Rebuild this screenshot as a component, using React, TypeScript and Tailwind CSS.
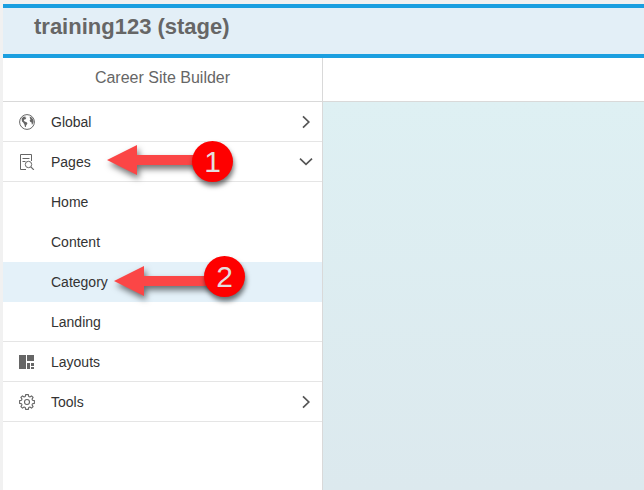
import { Fragment, type ReactNode } from 'react'

interface CalloutProps {
  step: number
  className: string
  badgeClassName: string
}

interface MenuItem {
  label: string
  icon: ReactNode
  chevron?: 'right' | 'down'
  callout?: ReactNode
  children?: { label: string; active?: boolean; callout?: ReactNode }[]
}

function GlobeIcon() {
  return (
    <svg viewBox="0 0 16 16" className="size-4" aria-hidden="true">
      <circle cx="8" cy="8" r="7.4" fill="none" stroke="#666" strokeWidth="1" />
      <path
        fill="#666"
        d="M2.6 4.4 4.4 2.8 6.6 2.4 6.2 3.6 7.4 3.8 6.6 5.2 5.2 5.6 4.8 6.8 5.8 7.4 8 8.6 8.4 9.8 7.2 11.2 6.8 13 6 13 5.4 10.4 4.2 8.6 3 7.4Z"
      />
      <path
        fill="#666"
        d="M10.6 2.6 12.4 3.2 14.2 5.6 14.6 8 13.4 10.6 12.8 10.4 12.6 8.4 11.2 7.8 10.6 6.4 11.6 5.2 11 4.4Z"
      />
    </svg>
  )
}

function PagesIcon() {
  return (
    <svg viewBox="0 0 16 16" className="size-4" fill="none" stroke="#666" aria-hidden="true">
      <path d="M12.5 7V.5h-11v15H7M3.5 4.5h7M3.5 7.5h3" />
      <circle cx="9.5" cy="10.5" r="3.2" />
      <path d="m11.8 12.8 3 3" strokeWidth="1.2" />
    </svg>
  )
}

function LayoutIcon() {
  return (
    <svg viewBox="0 0 16 16" className="size-4" fill="#666" aria-hidden="true">
      <path d="M0 1h7v14H0zM8 1h7v6H8zM8 9h3v6H8zM12 9h3v3h-3zM12 13h3v2h-3z" />
    </svg>
  )
}

function GearIcon() {
  return (
    <svg viewBox="0 0 16 16" className="size-4" fill="none" stroke="#666" strokeWidth="1.1" strokeLinejoin="round" aria-hidden="true">
      <path d="M6.6.6h2.8l.3 1.9 1.2.5 1.6-1.1 1.6 1.6L13 5.1l.5 1.2 1.9.3v2.8l-1.9.3-.5 1.2 1.1 1.6-1.6 1.6-1.6-1.1-1.2.5-.3 1.9H6.6l-.3-1.9-1.2-.5-1.6 1.1-1.6-1.6L3 10.9l-.5-1.2-1.9-.3V6.6l1.9-.3L3 5.1 1.9 3.5l1.6-1.6L5.1 3l1.2-.5z" />
      <circle cx="8" cy="8" r="2.5" />
    </svg>
  )
}

function Chevron({ direction }: { direction: 'right' | 'down' }) {
  return (
    <svg viewBox="0 0 16 16" className="size-4" fill="none" stroke="#555" strokeWidth="1.7" aria-hidden="true">
      <path d={direction === 'right' ? 'M5 2.3 10.8 8 5 13.7' : 'M2 4.7 8 10.3 14 4.7'} />
    </svg>
  )
}

// Red arrow pointing at a menu entry, with a numbered badge on its tail
function Callout({ step, className, badgeClassName }: CalloutProps) {
  return (
    <div className={`pointer-events-none absolute z-10 flex items-center ${className}`}>
      <svg
        viewBox="0 0 100 30"
        className="h-[30px] w-[100px] overflow-visible drop-shadow-[2px_4px_3px_rgba(0,0,0,0.55)]"
        aria-hidden="true"
      >
        <path d="M0 15 30 0v10h70v10H30v10z" fill="#fb4646" />
      </svg>
      <span
        className={`absolute flex size-[41px] items-center justify-center rounded-full bg-[#fe0000] text-[30px] leading-none text-[#e4dede] shadow-[1px_4px_5px_rgba(0,0,0,0.55)] ${badgeClassName}`}
      >
        {step}
      </span>
    </div>
  )
}

const menu: MenuItem[] = [
  { label: 'Global', icon: <GlobeIcon />, chevron: 'right' },
  {
    label: 'Pages',
    icon: <PagesIcon />,
    chevron: 'down',
    callout: <Callout step={1} className="left-[104px] top-[3px]" badgeClassName="left-[85px] -top-1" />,
    children: [
      { label: 'Home' },
      { label: 'Content' },
      {
        label: 'Category',
        active: true,
        callout: <Callout step={2} className="left-[111px] top-1" badgeClassName="left-[90px] -top-[10px]" />,
      },
      { label: 'Landing' },
    ],
  },
  { label: 'Layouts', icon: <LayoutIcon /> },
  { label: 'Tools', icon: <GearIcon />, chevron: 'right' },
]

export default function App() {
  return (
    <div className="flex min-h-screen flex-col bg-[#f1f1f1] pl-[3px] pt-1 font-['Liberation_Sans',Arial,sans-serif]">
      <header className="border-y-4 border-[#1b9fe0] bg-[#e3eff7] px-[31px] pb-3.5 pt-1.5">
        <h1 className="text-[22px] font-bold leading-[26px] text-[#666]">training123 (stage)</h1>
      </header>

      <div className="flex flex-1">
        <aside className="w-80 shrink-0 border-r border-[#d9d9d9] bg-white">
          <h2 className="border-b border-[#d9d9d9] pb-[11px] pt-2 text-center text-base text-[#666]">
            Career Site Builder
          </h2>
          <nav className="text-sm text-[#333]">
            {menu.map((item) => (
              <Fragment key={item.label}>
                <div className="relative">
                  <button
                    type="button"
                    className="flex h-10 w-full items-center border-b border-[#e5e5e5] pl-4 pr-2 text-left"
                  >
                    {item.icon}
                    <span className="ml-4 flex-1">{item.label}</span>
                    {item.chevron && <Chevron direction={item.chevron} />}
                  </button>
                  {item.callout}
                </div>
                {item.children && (
                  <ul className="border-b border-[#e5e5e5]">
                    {item.children.map((child) => (
                      <li key={child.label} className="relative last:-mb-px">
                        <a
                          href="#"
                          className={`flex h-10 items-center pl-12 ${child.active ? 'bg-[#e4f1f9]' : ''}`}
                        >
                          {child.label}
                        </a>
                        {child.callout}
                      </li>
                    ))}
                  </ul>
                )}
              </Fragment>
            ))}
          </nav>
        </aside>

        <main className="flex flex-1 flex-col">
          <div className="h-11 border-b border-[#d9d9d9] bg-white" />
          <div className="flex-1 bg-linear-to-b from-[#def0f3] to-[#dce9ee]" />
        </main>
      </div>
    </div>
  )
}
